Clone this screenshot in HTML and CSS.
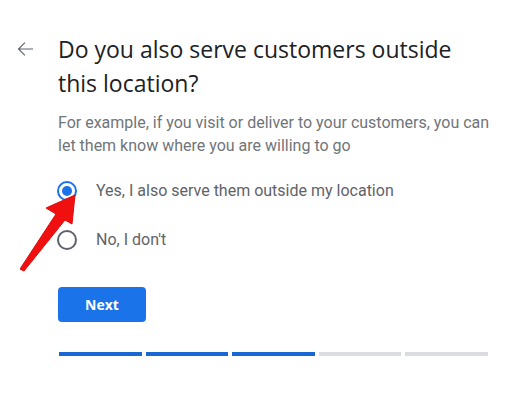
FILE: index.html
```html
<!DOCTYPE html>
<html>
<head>
<meta charset="utf-8">
<link rel="stylesheet" href="styles.css">
</head>
<body>
<div class="page">
  <div class="header">
    <button class="back" aria-label="Back">
      <svg width="24" height="24" viewBox="0 0 24 24"><path d="M20 11.4H6.9l5.4-5.4-.8-.8L4.7 12l6.8 6.8.8-.8-5.4-5.4H20z" fill="#5f6368"/></svg>
    </button>
    <h1 class="title">Do you also serve customers outside this location?</h1>
  </div>
  <div class="content">
    <p class="desc">For example, if you visit or deliver to your customers, you can let them know where you are willing to go</p>
    <div class="options">
      <label class="option"><span class="radio checked"></span><span class="label">Yes, I also serve them outside my location</span></label>
      <label class="option"><span class="radio"></span><span class="label">No, I don't</span></label>
    </div>
    <button class="next">Next</button>
    <div class="progress">
      <span class="seg done"></span><span class="seg done"></span><span class="seg done"></span><span class="seg"></span><span class="seg"></span>
    </div>
  </div>
  <svg class="arrow" width="70" height="90" viewBox="0 0 70 90">
    <path d="M55 5 L26 18 L36 24 L0 79 L4 81 L45 30 L52 34 Z" fill="#f01010" stroke="#e00a0a" stroke-width="1" stroke-linejoin="round"/>
  </svg>
</div>
</body>
</html>
```
FILE: styles.css
```css
* { box-sizing: border-box; }
html, body { margin: 0; padding: 0; background: #fff; }
body { font-family: Roboto, "Noto Sans", Arial, sans-serif; width: 513px; height: 396px; overflow: hidden; }
.page { position: relative; padding: 32px 0 0 0; }
.header { display: flex; align-items: flex-start; }
.back { border: 0; background: none; padding: 0; margin: 5px 0 0 13px; width: 24px; height: 24px; display: flex; align-items: center; justify-content: center; }
.title { margin: 0 0 0 21px; font-family: "Open Sans", Roboto, sans-serif; font-weight: 400; font-size: 23px; line-height: 34px; color: #202124; width: 410px; }
.content { padding-left: 58px; }
.desc { margin: 11px 0 0 0; font-size: 16px; line-height: 23px; color: #70757a; width: 440px; }
.options { margin-top: 23px; display: flex; flex-direction: column; gap: 28px; }
.option { display: flex; align-items: center; height: 21px; }
.radio { width: 20px; height: 20px; border-radius: 50%; border: 2px solid #5f6368; position: relative; flex: none; margin-left: -1px; }
.radio.checked { border-color: #1a73e8; }
.radio.checked::after { content: ""; position: absolute; left: 3px; top: 3px; width: 10px; height: 10px; border-radius: 50%; background: #1a73e8; }
.label { margin-left: 19px; font-size: 16px; color: #5f6368; }
.next { margin-top: 37px; display: block; width: 88px; height: 35px; border: 0; border-radius: 4px; background: #1a73e8; color: #fff; font-family: "Open Sans", Roboto, sans-serif; font-weight: 700; font-size: 14px; }
.progress { margin-top: 30px; display: flex; gap: 4px; width: 429px; margin-left: 1px; }
.seg { flex: 1; height: 4px; background: #dadce0; }
.seg.done { background: #1967d2; }
.arrow { position: absolute; left: 20px; top: 190px; }
```
